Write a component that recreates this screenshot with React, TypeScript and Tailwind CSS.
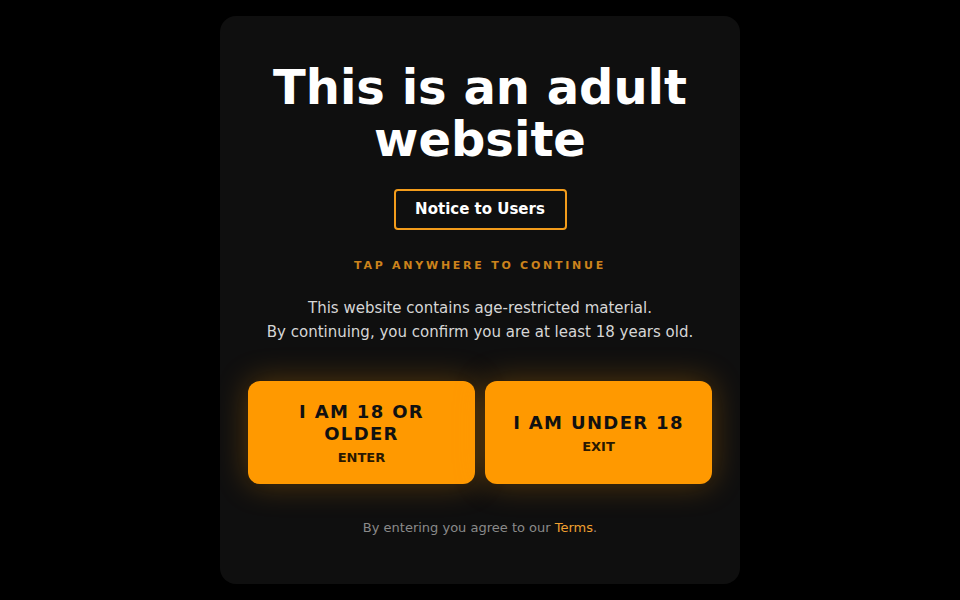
export default function App() {
  return (
    <div
      className="min-h-[600px] w-full bg-black flex justify-center py-4"
      style={{ fontFamily: '"DejaVu Sans", Verdana, sans-serif' }}
    >
      <div className="relative w-[520px] h-[568px] rounded-2xl bg-[#0f0f0f] overflow-hidden px-7 pt-[45px] flex flex-col items-center text-center">
        <h1 className="text-[48px] leading-[52px] font-bold text-white">
          This is an adult
          <br />
          website
        </h1>

        <button className="mt-[24px] h-[41px] w-[173px] rounded border-2 border-[#f39c1b] text-[15px] font-bold text-white">
          Notice to Users
        </button>

        <div className="mt-[28px] text-[11px] font-bold tracking-[0.25em] text-[#cc831c]">
          TAP ANYWHERE TO CONTINUE
        </div>

        <p className="mt-[21px] text-[15px] leading-6 text-[#d6d6d6]">
          This website contains age-restricted material.
          <br />
          By continuing, you confirm you are at least 18 years old.
        </p>

        <div className="mt-[37px] grid w-full grid-cols-2 gap-[10px]">
          <button className="h-[103px] rounded-xl bg-[#ff9900] px-6 pt-[4px] flex flex-col items-center justify-center shadow-[0_0_32px_rgba(255,153,0,0.3)]">
            <span className="text-[18px] leading-[22px] font-bold tracking-[0.075em] text-[#111]">I AM 18 OR OLDER</span>
            <span className="mt-[3px] text-[13px] font-bold text-[#2a1800]">ENTER</span>
          </button>
          <button className="h-[103px] rounded-xl bg-[#ff9900] px-6 pt-[4px] flex flex-col items-center justify-center shadow-[0_0_32px_rgba(255,153,0,0.3)]">
            <span className="text-[18px] leading-[22px] font-bold tracking-[0.075em] text-[#111]">I AM UNDER 18</span>
            <span className="mt-[3px] text-[13px] font-bold text-[#2a1800]">EXIT</span>
          </button>
        </div>

        <p className="mt-[34px] text-[13px] text-[#8a8a8a]">
          By entering you agree to our <span className="text-[#f0a030]">Terms</span>.
        </p>
      </div>
    </div>
  );
}
